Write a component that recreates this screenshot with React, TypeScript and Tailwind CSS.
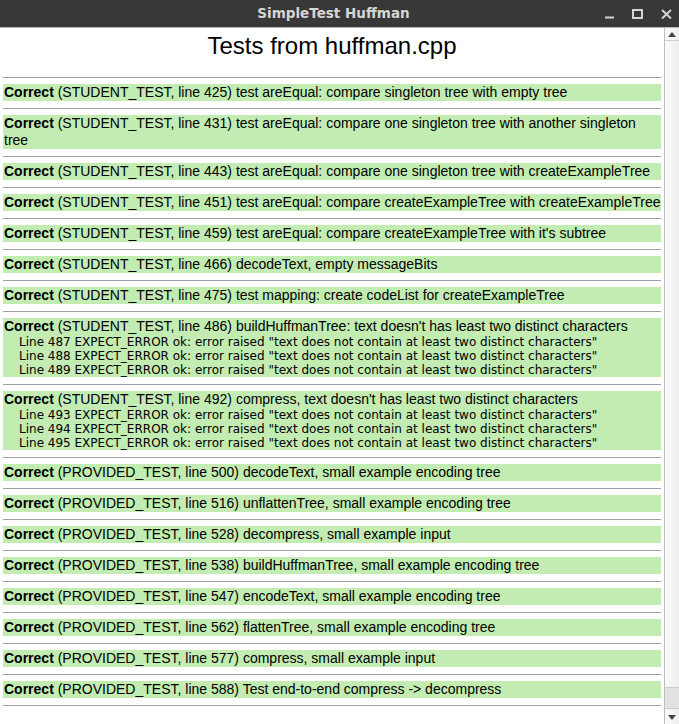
import React from "react";

interface TestResult {
  kind: string;
  line: number;
  name: string;
  details?: string[];
}

const expectErr = (lines: number[]) =>
  lines.map(
    (n) =>
      `Line ${n} EXPECT_ERROR ok: error raised "text does not contain at least two distinct characters"`
  );

const results: TestResult[] = [
  { kind: "STUDENT_TEST", line: 425, name: "test areEqual: compare singleton tree with empty tree" },
  { kind: "STUDENT_TEST", line: 431, name: "test areEqual: compare one singleton tree with another singleton tree" },
  { kind: "STUDENT_TEST", line: 443, name: "test areEqual: compare one singleton tree with createExampleTree" },
  { kind: "STUDENT_TEST", line: 451, name: "test areEqual: compare createExampleTree with createExampleTree" },
  { kind: "STUDENT_TEST", line: 459, name: "test areEqual: compare createExampleTree with it's subtree" },
  { kind: "STUDENT_TEST", line: 466, name: "decodeText, empty messageBits" },
  { kind: "STUDENT_TEST", line: 475, name: "test mapping: create codeList for createExampleTree" },
  {
    kind: "STUDENT_TEST",
    line: 486,
    name: "buildHuffmanTree: text doesn't has least two distinct characters",
    details: expectErr([487, 488, 489]),
  },
  {
    kind: "STUDENT_TEST",
    line: 492,
    name: "compress, text doesn't has least two distinct characters",
    details: expectErr([493, 494, 495]),
  },
  { kind: "PROVIDED_TEST", line: 500, name: "decodeText, small example encoding tree" },
  { kind: "PROVIDED_TEST", line: 516, name: "unflattenTree, small example encoding tree" },
  { kind: "PROVIDED_TEST", line: 528, name: "decompress, small example input" },
  { kind: "PROVIDED_TEST", line: 538, name: "buildHuffmanTree, small example encoding tree" },
  { kind: "PROVIDED_TEST", line: 547, name: "encodeText, small example encoding tree" },
  { kind: "PROVIDED_TEST", line: 562, name: "flattenTree, small example encoding tree" },
  { kind: "PROVIDED_TEST", line: 577, name: "compress, small example input" },
  { kind: "PROVIDED_TEST", line: 588, name: "Test end-to-end compress -> decompress" },
];

const TitleBar: React.FC = () => (
  <div className="relative flex h-[28px] items-center justify-center border-b border-[#b4b4b4] bg-[#383838] pr-[12px]">
    <span className="font-['DejaVu_Sans',sans-serif] text-[13.5px] font-bold text-[#d6d6d6]">
      SimpleTest Huffman
    </span>
    {/* window controls */}
    <div className="absolute right-0 top-0 h-[28px]">
      <svg width="80" height="28" viewBox="0 0 80 28">
        <rect x="6" y="16.5" width="9" height="2" fill="#d4d4d4" />
        <rect x="34" y="10" width="9" height="8" fill="none" stroke="#d4d4d4" strokeWidth="2" />
        <path d="M63 10 L72 18.5 M72 10 L63 18.5" stroke="#d4d4d4" strokeWidth="2" />
      </svg>
    </div>
  </div>
);

const ResultRow: React.FC<{ r: TestResult }> = ({ r }) => (
  <div className="border-t border-[#a0a0a0] pt-[6px] pb-[7px]">
    <div className="bg-[#c3ecb2] pl-[1px] text-black">
      <div className="text-[14px] leading-[17px]">
        <b>Correct</b> ({r.kind}, line {r.line}) {r.name}
      </div>
      {r.details?.map((d) => (
        <div key={d} className="pl-[15px] font-['DejaVu_Sans',sans-serif] text-[12px] leading-[14px]">
          {d}
        </div>
      ))}
    </div>
  </div>
);

const Scrollbar: React.FC = () => (
  <div className="flex w-[15px] flex-col border-l border-[#bdbdbd] bg-gradient-to-r from-[#fafafa] to-[#eeeeee]">
    <div className="flex h-[13px] items-center justify-center border-b border-[#d0d0d0]">
      <svg width="8" height="5" viewBox="0 0 8 5">
        <path d="M0 5 L4 0 L8 5 Z" fill="#444" />
      </svg>
    </div>
    <div className="flex-1" />
    <div className="mb-[2px] h-[22px] border-y border-[#c8c8c8] bg-[#e2e2e2]" />
    <div className="flex h-[13px] items-center justify-center">
      <svg width="8" height="5" viewBox="0 0 8 5">
        <path d="M0 0 L8 0 L4 5 Z" fill="#444" />
      </svg>
    </div>
  </div>
);

export default function App() {
  return (
    <div className="flex h-[724px] w-[679px] flex-col overflow-hidden bg-white font-['Liberation_Sans',Arial,sans-serif]">
      <TitleBar />
      <div className="flex min-h-0 flex-1">
        <div className="flex-1 overflow-hidden px-[3px]">
          <h1 className="mt-[4px] mb-[17px] text-center text-[24px] leading-[28px] text-black">
            Tests from huffman.cpp
          </h1>
          {results.map((r) => (
            <ResultRow key={r.line} r={r} />
          ))}
          <div className="border-t border-[#a0a0a0]" />
        </div>
        <Scrollbar />
      </div>
    </div>
  );
}
